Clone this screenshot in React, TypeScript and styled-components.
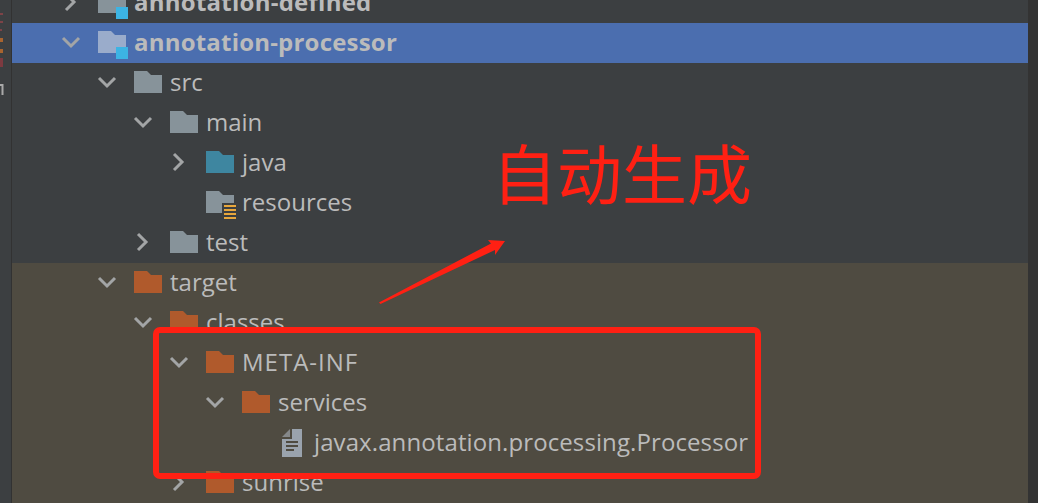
import React, { FC } from 'react';
import styled, { createGlobalStyle } from 'styled-components';

const GlobalStyle = createGlobalStyle`
  html, body {
    margin: 0;
    padding: 0;
    background: #3c3f41;
  }
`;

const Window = styled.div`
  position: relative;
  display: flex;
  width: 1038px;
  height: 503px;
  overflow: hidden;
  background: #3c3f41;
  font-family: 'Open Sans', 'Noto Sans', sans-serif;
`;

const Gutter = styled.div`
  flex: 0 0 11px;
  border-right: 1px solid #323232;
`;

const GutterMarks = styled.svg`
  display: block;
  width: 11px;
  height: 100px;
`;

const Tree = styled.div`
  flex: 1;
  margin-top: -17px;
`;

const ScrollEdge = styled.div`
  flex: 0 0 10px;
  background: #333333;
`;

const Row = styled.div<{ $depth: number; $selected?: boolean; $excluded?: boolean }>`
  box-sizing: border-box;
  display: flex;
  align-items: center;
  height: 40px;
  padding-left: ${(p) => 48 + p.$depth * 36}px;
  padding-bottom: 2px;
  background: ${(p) => (p.$selected ? '#4b6eaf' : p.$excluded ? '#4f4b41' : 'transparent')};
`;

const Arrow = styled.svg`
  flex: 0 0 22px;
  width: 22px;
  height: 22px;
  margin-right: 16px;
  fill: none;
  stroke: #a3a5a6;
  stroke-width: 3;
`;

const NoArrow = styled.span`
  flex: 0 0 22px;
  margin-right: 16px;
`;

const Icon = styled.svg`
  flex: 0 0 36px;
  width: 36px;
  height: 28px;
  overflow: visible;
`;

const Label = styled.span<{ $bold?: boolean; $tracking?: number }>`
  font-size: 24px;
  font-weight: ${(p) => (p.$bold ? 700 : 400)};
  letter-spacing: ${(p) => p.$tracking ?? 0}px;
  line-height: 40px;
  color: #bbbbbb;
  white-space: nowrap;
`;

const RedBox = styled.div`
  position: absolute;
  left: 153px;
  top: 327px;
  width: 596px;
  height: 140px;
  border: 6px solid #ff2013;
  border-radius: 7px;
`;

const Note = styled.div`
  position: absolute;
  left: 492px;
  top: 125px;
  font-family: 'Noto Sans CJK SC', sans-serif;
  font-size: 65px;
  line-height: 92px;
  color: #ff2013;
  white-space: nowrap;
`;

const NoteArrow = styled.svg`
  position: absolute;
  left: 370px;
  top: 230px;
  width: 145px;
  height: 80px;
`;

const FOLDER = 'M0 0H13L17 4H28V22H0Z';

type Kind = 'plain' | 'source' | 'resources' | 'output' | 'module' | 'file';

const NodeIcon: FC<{ kind: Kind; selected?: boolean }> = ({ kind, selected }) => {
  if (kind === 'file') {
    return (
      <Icon viewBox="0 0 36 28">
        <path d="M14 1H24V29H4V11H14Z" fill="#9aa3ad" />
        <path d="M12 1V9H4Z" fill="#85888a" />
        <path d="M8 14H20M8 18H20M8 22H16" stroke="#4f4b41" strokeWidth="2" />
      </Icon>
    );
  }
  const fill =
    kind === 'source'
      ? '#3e86a0'
      : kind === 'output'
        ? '#b05a2c'
        : selected
          ? '#9aaccb'
          : '#87939a';
  return (
    <Icon viewBox="0 0 36 28">
      <path d={FOLDER} transform="translate(0 3)" fill={fill} />
      {kind === 'module' && <rect x="18" y="19" width="12" height="12" fill="#3cb4e4" />}
      {kind === 'resources' && (
        <g>
          <rect x="16" y="15" width="14" height="10" fill="#3c3f41" />
          <path d="M18 18H30M18 22H30M18 26H30M18 30H30" stroke="#e8a73c" strokeWidth="2" />
        </g>
      )}
    </Icon>
  );
};

type Node = {
  depth: number;
  name: string;
  kind: Kind;
  open?: boolean;
  leaf?: boolean;
  selected?: boolean;
  excluded?: boolean;
  bold?: boolean;
  tracking?: number;
};

const nodes: Node[] = [
  { depth: 0, name: 'annotation-defined', kind: 'module', bold: true, tracking: 0.25 },
  { depth: 0, name: 'annotation-processor', kind: 'module', open: true, selected: true, bold: true, tracking: 0.2 },
  { depth: 1, name: 'src', kind: 'plain', open: true },
  { depth: 2, name: 'main', kind: 'plain', open: true },
  { depth: 3, name: 'java', kind: 'source' },
  { depth: 3, name: 'resources', kind: 'resources', leaf: true },
  { depth: 2, name: 'test', kind: 'plain' },
  { depth: 1, name: 'target', kind: 'output', open: true, excluded: true },
  { depth: 2, name: 'classes', kind: 'output', open: true, excluded: true },
  { depth: 3, name: 'META-INF', kind: 'output', open: true, excluded: true, tracking: 1 },
  { depth: 4, name: 'services', kind: 'output', open: true, excluded: true },
  { depth: 5, name: 'javax.annotation.processing.Processor', kind: 'file', leaf: true, excluded: true, tracking: 0.1 },
  { depth: 3, name: 'sunrise', kind: 'output', excluded: true },
];

const App: FC = () => (
  <>
    <GlobalStyle />
    <Window>
      <Gutter>
        {/* clipped edge of the neighbouring panel */}
        <GutterMarks viewBox="0 0 11 100">
          <path d="M0 14H3M0 22H3M0 30H2" stroke="#7d4347" strokeWidth="2" />
          <rect y="38" width="3" height="4" fill="#a8642f" />
          <rect y="49" width="3" height="4" fill="#a8642f" />
          <rect y="58" width="3" height="9" fill="#7d3a40" />
          <path d="M0 85H2.5V95" fill="none" stroke="#a9a9a9" strokeWidth="2" />
        </GutterMarks>
      </Gutter>
      <Tree>
        {nodes.map((n) => (
          <Row key={n.name} $depth={n.depth} $selected={n.selected} $excluded={n.excluded}>
            {n.leaf ? (
              <NoArrow />
            ) : (
              <Arrow viewBox="0 0 22 22">
                <path d={n.open ? 'M3 7L11 15L19 7' : 'M6 3L14 11L6 19'} />
              </Arrow>
            )}
            <NodeIcon kind={n.kind} selected={n.selected} />
            <Label $bold={n.bold} $tracking={n.tracking}>
              {n.name}
            </Label>
          </Row>
        ))}
      </Tree>
      <ScrollEdge />
      <RedBox />
      <Note>自动生成</Note>
      <NoteArrow viewBox="370 230 145 80">
        <path d="M379 302.5L491 243.5L488 240L505 241L495 255L495 250L380.5 304Z" fill="#ff2013" />
      </NoteArrow>
    </Window>
  </>
);

export default App;
